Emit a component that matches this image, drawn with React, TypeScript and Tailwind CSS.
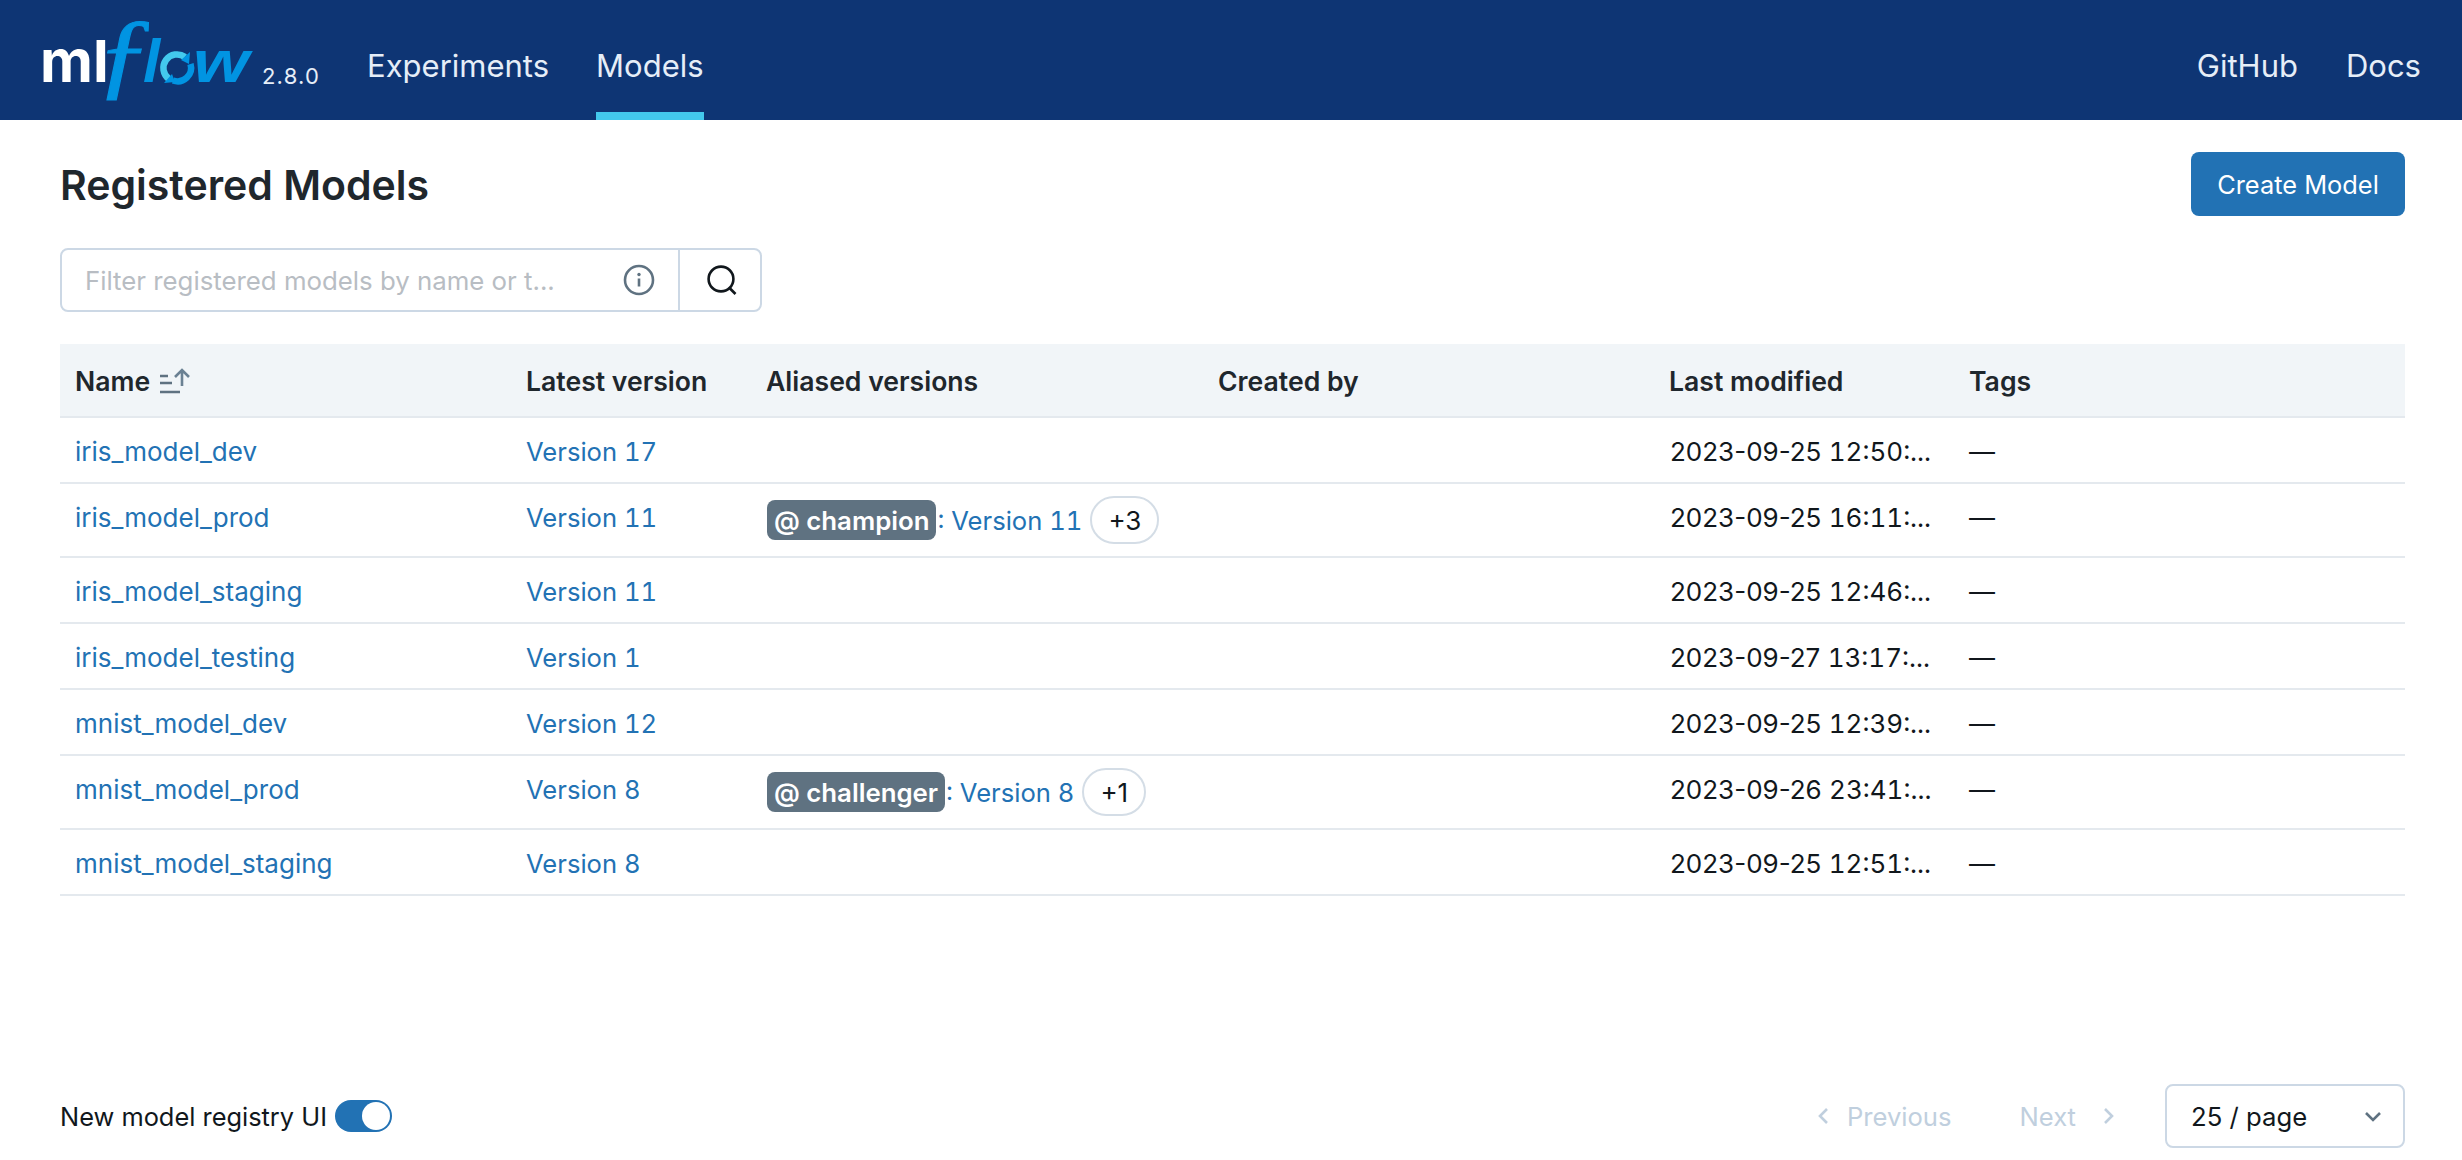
import React from "react";

const LINK = "text-[#2272b4]";

function Logo() {
  return (
    <svg width="224" height="92" viewBox="0 0 224 92" className="shrink-0">
      <text x="4" y="68" fontFamily="Inter, sans-serif" fontWeight="700" fontSize="58" fill="#ffffff">ml</text>
      <text x="59" y="72" textLength="58" lengthAdjust="spacingAndGlyphs" fontFamily="'Liberation Serif', serif" fontStyle="italic" fontSize="98" fill="#0194e2" stroke="#0194e2" strokeWidth="1">ƒ</text>
      <text x="107" y="68" fontFamily="'Liberation Sans', sans-serif" fontStyle="italic" fontWeight="700" fontSize="62" fill="#0194e2">l</text>
      <path d="M133 65A13.5 13.5 0 0 1 149 43" fill="none" stroke="#43c9ed" strokeWidth="6.5" />
      <path d="M154.5 50A13.5 13.5 0 0 1 137 66.5" fill="none" stroke="#0194e2" strokeWidth="6.5" />
      <path d="M145 46L154 38L153 50ZM136 60L128 69L139 68Z" fill="#0194e2" />
      <text x="157" y="68" textLength="56" lengthAdjust="spacingAndGlyphs" fontFamily="'Liberation Sans', sans-serif" fontStyle="italic" fontWeight="700" fontSize="60" fill="#0194e2">w</text>
    </svg>
  );
}

function SortIcon() {
  return (
    <svg width="30" height="27" viewBox="0 0 30 27" className="shrink-0">
      <path d="M0 8h8M0 15h12M0 24h20" stroke="#5f7281" strokeWidth="2.6" fill="none" />
      <path d="M22 18V2.5M15 9l7-7 7 7" stroke="#6b8193" strokeWidth="2.6" fill="none" />
    </svg>
  );
}

function InfoIcon() {
  return (
    <svg width="32" height="32" viewBox="0 0 32 32" className="shrink-0">
      <circle cx="16" cy="16" r="14" stroke="#5f7281" strokeWidth="2.6" fill="none" />
      <path d="M16 14.5v8" stroke="#5f7281" strokeWidth="2.6" fill="none" />
      <circle cx="16" cy="10.5" r="1.7" fill="#5f7281" />
    </svg>
  );
}

function SearchIcon() {
  return (
    <svg width="32" height="32" viewBox="0 0 32 32">
      <circle cx="15" cy="15" r="12.4" stroke="#11171c" strokeWidth="2.6" fill="none" />
      <path d="M23.5 24l6 6" stroke="#11171c" strokeWidth="2.6" fill="none" />
    </svg>
  );
}

function Chevron({ dir, color }: { dir: "left" | "right" | "down"; color: string }) {
  const d = dir === "left" ? "M12 3L5 10l7 7" : dir === "right" ? "M8 3l7 7-7 7" : "M3 7l7 7 7-7";
  return (
    <svg width="20" height="20" viewBox="0 0 20 20" className="shrink-0">
      <path d={d} stroke={color} strokeWidth="2.6" fill="none" />
    </svg>
  );
}

type Row = {
  name: string;
  version: string;
  date: string;
  time: string;
  alias?: { tag: string; ver: string; more: string };
};

const rows: Row[] = [
  { name: "iris_model_dev", version: "Version 17", date: "2023-09-25", time: "12:50:..." },
  { name: "iris_model_prod", version: "Version 11", date: "2023-09-25", time: "16:11:...", alias: { tag: "@ champion", ver: "Version 11", more: "+3" } },
  { name: "iris_model_staging", version: "Version 11", date: "2023-09-25", time: "12:46:..." },
  { name: "iris_model_testing", version: "Version 1", date: "2023-09-27", time: "13:17:..." },
  { name: "mnist_model_dev", version: "Version 12", date: "2023-09-25", time: "12:39:..." },
  { name: "mnist_model_prod", version: "Version 8", date: "2023-09-26", time: "23:41:...", alias: { tag: "@ challenger", ver: "Version 8", more: "+1" } },
  { name: "mnist_model_staging", version: "Version 8", date: "2023-09-25", time: "12:51:..." },
];

const cols = "grid grid-cols-[450px_241px_451px_451px_300px_1fr]";

export default function App() {
  return (
    <div className="h-[1160px] w-[2462px] flex flex-col overflow-hidden bg-white text-[26px] leading-[40px] text-[#11171c] [font-family:Inter,sans-serif]">
      <header className="h-[120px] shrink-0 bg-[#0e3574] flex items-stretch pl-[36px] pr-[41px] text-[31px] text-[#e6eef8]">
        <div className="flex items-center">
          <Logo />
          <span className="ml-[2px] mt-[32px] text-[22px] tracking-[1.2px] leading-[28px]">2.8.0</span>
        </div>
        <nav className="ml-[47px] flex gap-[47px]">
          <a className="flex items-center pt-[20px] border-b-[8px] border-transparent">Experiments</a>
          <a className="flex items-center pt-[20px] border-b-[8px] border-[#43c9ed]">Models</a>
        </nav>
        <nav className="ml-auto flex gap-[48px] items-center pt-[12px]">
          <a>GitHub</a>
          <a>Docs</a>
        </nav>
      </header>

      <main className="flex-1 flex flex-col pl-[60px] pr-[57px]">
        <div className="flex items-center justify-between pt-[32px] h-[128px] pb-[32px]">
          <h1 className="text-[41px] font-semibold leading-[56px] text-[#1f272d] pt-[2px]">Registered Models</h1>
          <button className="h-[64px] w-[214px] rounded-[8px] bg-[#2272b4] text-white text-[25.4px] pt-[2px]">Create Model</button>
        </div>

        <div className="flex h-[64px] w-[702px] rounded-[8px] border-2 border-[#ccd8e5]">
          <div className="flex-1 flex items-center pl-[23px] pr-[23px] justify-between">
            <span className="text-[#b8bdc3] text-[25.8px] pt-[2px]">Filter registered models by name or t...</span>
            <InfoIcon />
          </div>
          <div className="w-[82px] border-l-2 border-[#ccd8e5] flex items-center justify-center pl-[3px]">
            <SearchIcon />
          </div>
        </div>

        <div className={`${cols} mt-[32px] h-[74px] items-center bg-[#f1f5f8] border-b-2 border-[#e4e9ee] font-semibold text-[26.6px] text-[#1f272d]`}>
          <div className="pl-[15px] flex items-center gap-[10px] pt-[2px]">Name <SortIcon /></div>
          <div className="pl-[16px] pt-[2px]">Latest version</div>
          <div className="pl-[15px] pt-[2px]">Aliased versions</div>
          <div className="pl-[16px] pt-[2px]">Created by</div>
          <div className="pl-[16px] pt-[2px]">Last modified</div>
          <div className="pl-[16px] pt-[2px]">Tags</div>
        </div>

        {rows.map((r) => (
          <div key={r.name} className={`${cols} border-b-2 border-[#e4e9ee] ${r.alias ? "h-[74px]" : "h-[66px]"}`}>
            <div className={`pl-[15px] pt-[14px] ${LINK}`}>{r.name}</div>
            <div className={`pl-[16px] pt-[14px] text-[25.6px] tabular-nums ${LINK}`}>{r.version}</div>
            <div className="pl-[16px]">
              {r.alias && (
                <div className="flex items-center pt-[12px]">
                  <span className="h-[40px] flex items-center px-[7px] rounded-[8px] bg-[#5f7281] text-white font-semibold text-[25.8px] pt-[1px]">{r.alias.tag}</span>
                  <span className={`${LINK} ml-[1px] pt-[2px] text-[25.6px] tabular-nums`}>: {r.alias.ver}</span>
                  <span className="ml-[8px] h-[48px] px-[16px] flex items-center justify-center rounded-full border-2 border-[#d4dde6] pt-[1px]">{r.alias.more}</span>
                </div>
              )}
            </div>
            <div />
            <div className="pl-[17px] pt-[14px] whitespace-nowrap overflow-hidden">
              {r.date} <span className="tabular-nums">{r.time}</span>
            </div>
            <div className="pl-[16px] pt-[14px]">—</div>
          </div>
        ))}

        <div className="mt-auto mb-[12px] flex items-center">
          <span className="text-[25.4px] pt-[2px]">New model registry UI</span>
          <span className="ml-[8px] w-[57px] h-[32px] rounded-full bg-[#2272b4] flex items-center justify-end pr-[2px]">
            <span className="w-[28px] h-[28px] rounded-full bg-white" />
          </span>
          <div className="ml-auto flex items-center text-[#c0cfde]">
            <Chevron dir="left" color="#c0cfde" />
            <span className="ml-[12px] text-[25.6px] pt-[2px]">Previous</span>
            <span className="ml-[68px] text-[25.6px] pt-[2px]">Next</span>
            <span className="ml-[21px]"><Chevron dir="right" color="#c0cfde" /></span>
            <div className="ml-[48px] w-[240px] h-[64px] rounded-[8px] border-2 border-[#ccd8e5] flex items-center justify-between pl-[24px] pr-[20px] text-[#11171c]">
              <span className="text-[25.7px] pt-[2px]">25 / page</span>
              <Chevron dir="down" color="#5f7281" />
            </div>
          </div>
        </div>
      </main>
    </div>
  );
}
